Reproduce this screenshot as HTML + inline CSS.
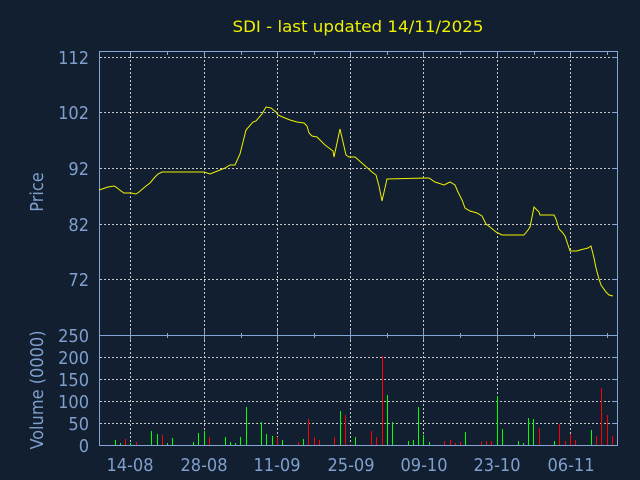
<!DOCTYPE html>
<html><head><meta charset="utf-8"><style>
html,body{margin:0;padding:0;background:#111f30;width:640px;height:480px;overflow:hidden}
svg{display:block}
text{font-family:"DejaVu Sans Condensed","Liberation Sans Narrow","DejaVu Sans",sans-serif}
</style></head><body>
<svg width="640" height="480" xmlns="http://www.w3.org/2000/svg">
<rect width="640" height="480" fill="#111f30"/>
<text x="358" y="32" fill="#f0f000" font-size="16" text-anchor="middle" textLength="251" lengthAdjust="spacingAndGlyphs">SDI - last updated 14/11/2025</text>
<g stroke="#c8c8c8" stroke-width="1" stroke-dasharray="2,2" fill="none" shape-rendering="crispEdges">
<path d="M100 57.5H612M100 112.5H612M100 168.5H612M100 224.5H612M100 279.5H612"/>
<path d="M100 357.5H612M100 379.5H612M100 401.5H612M100 423.5H612"/>
<path d="M130.5 52V445M204.5 52V445M277.5 52V445M350.5 52V445M423.5 52V445M497.5 52V445M570.5 52V445"/>
</g>
<g stroke="#84a6d6" stroke-width="1" fill="none" shape-rendering="crispEdges">
<rect x="99.5" y="51.5" width="518" height="394"/>
<path d="M99 335.5H618"/>
<path d="M130.5 52v5M167.5 52v3M204.5 52v5M241.5 52v3M277.5 52v5M314.5 52v3M350.5 52v5M387.5 52v3M423.5 52v5M460.5 52v3M497.5 52v5M534.5 52v3M570.5 52v5M607.5 52v3"/>
<path d="M130.5 330v10M167.5 333v5M204.5 330v10M241.5 333v5M277.5 330v10M314.5 333v5M350.5 330v10M387.5 333v5M423.5 330v10M460.5 333v5M497.5 330v10M534.5 333v5M570.5 330v10M607.5 333v5"/>
<path d="M612 57.5h5M612 112.5h5M612 168.5h5M612 224.5h5M612 279.5h5M612 357.5h5M612 379.5h5M612 401.5h5M612 423.5h5"/>
</g>
<g fill="#7f9fcc" font-size="18" text-anchor="end">
<text x="89" y="64">112</text><text x="89" y="119">102</text><text x="89" y="175">92</text><text x="89" y="231">82</text><text x="89" y="286">72</text>
<text x="89" y="342">250</text><text x="89" y="364">200</text><text x="89" y="386">150</text><text x="89" y="408">100</text><text x="89" y="430">50</text><text x="89" y="452">0</text>
</g>
<g fill="#7f9fcc" font-size="18" text-anchor="middle">
<text x="130" y="471">14-08</text><text x="204" y="471">28-08</text><text x="277" y="471">11-09</text><text x="351" y="471">25-09</text><text x="424" y="471">09-10</text><text x="497" y="471">23-10</text><text x="571" y="471">06-11</text>
<text transform="translate(43,192) rotate(-90)">Price</text>
<text transform="translate(43,390) rotate(-90)">Volume (0000)</text>
</g>
<polyline fill="none" stroke="#f0f000" stroke-width="1" points="99,190 102,189 108,187 114,186 116,187 121,191 124,193 131,193 136,194 139,192 146,186 150,183 155,177 158,174 162,172 204,172 210,174 215,172 225,168 230,165 235,165 240,154 246,130 253,122 256,121 262,114 266,107 271,108 276,112 278,115 285,118 290,120 297,122 304,123 307,126 309,133 312,136 317,137 325,145 333,151 334,157 340,129 346,155 349,157 355,157 363,164 372,172 376,175 379,186 382,201 387,179 426,178 429,178 435,182 444,185 450,182 455,185 458,192 462,200 465,208 470,211 477,213 482,216 486,224 490,227 496,232 502,235 524,235 528,230 530,227 533,212 534,207 539,212 540,215 554,215 556,219 559,229 562,232 565,236 568,245 570,251 577,251 580,250 584,249 588,248 591,246 594,258 596,268 599,279 601,285 606,292 609,295 613,296"/>
<g stroke-width="1" shape-rendering="crispEdges">
<g stroke="#00ff00">
<path d="M115.5 445V440M120.5 445V443M130.5 445V443M151.5 445V431M157.5 445V434M167.5 445V443M172.5 445V438M193.5 445V442M198.5 445V433M204.5 445V431M225.5 445V437M230.5 445V442M235.5 445V443M240.5 445V437M246.5 445V407M261.5 445V422M266.5 445V434M272.5 445V436M282.5 445V440M303.5 445V439M340.5 445V411M355.5 445V437M387.5 445V395M392.5 445V422M408.5 445V441M413.5 445V440M418.5 445V407M423.5 445V435M429.5 445V442M465.5 445V432M497.5 445V396M502.5 445V429M518.5 445V441M523.5 445V443M528.5 445V418M533.5 445V419M554.5 445V441M591.5 445V430"/>
</g>
<g stroke="#ff0000">
<path d="M125.5 445V439M136.5 445V442M162.5 445V435M209.5 445V437M277.5 445V437M298.5 445V442M308.5 445V419M314.5 445V437M319.5 445V440M334.5 445V437M345.5 445V415M350.5 445V444M371.5 445V431M376.5 445V437M382.5 445V356M444.5 445V441M450.5 445V440M455.5 445V443M460.5 445V442M481.5 445V442M486.5 445V441M491.5 445V441M539.5 445V428M559.5 445V424M565.5 445V441M570.5 445V434M575.5 445V440M596.5 445V436M601.5 445V388M607.5 445V415M612.5 445V436"/>
</g>
</g>
</svg>
</body></html>
